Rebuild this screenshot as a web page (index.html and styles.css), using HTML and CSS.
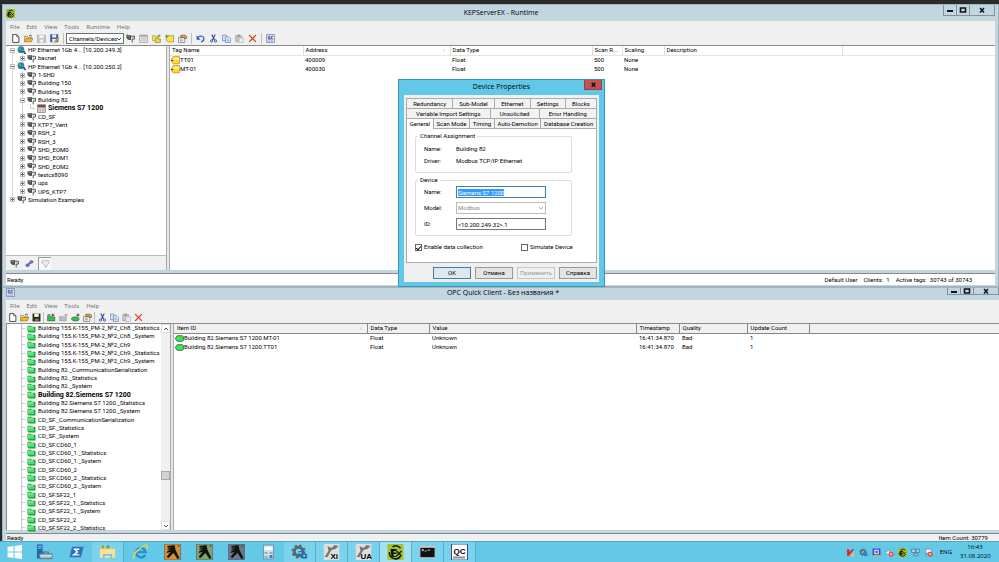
FILE: index.html
```html
<!DOCTYPE html>
<html lang="en">
<head>
  <meta charset="UTF-8">
  <meta name="viewport" content="width=device-width, initial-scale=1.0">
  <title>KEPServerEX - Runtime</title>
  <link rel="stylesheet" href="styles.css">
</head>
<body>
  <!-- icon sprite -->
  <svg class="sprite" aria-hidden="true">
    <symbol id="i-kep" viewBox="0 0 16 16"><rect width="16" height="16" fill="#a4c526"/><path d="M5 3q4-3 8 1M2 8a6 6 0 0 0 11 4" fill="none" stroke="#111" stroke-width="1.500"/><path d="M3 5h6v2H6v1.500h3v1.500H6V12h3v1H4z" fill="#111"/><path d="m9 7 5 5m0-5-5 5" stroke="#111" stroke-width="1.300"/></symbol>
    <symbol id="i-new" viewBox="0 0 16 16"><path d="M3 1h7l4 4v10H3z" fill="#fff" stroke="#334" stroke-width="1.500"/><path d="M10 1v4h4" fill="none" stroke="#334"/></symbol>
    <symbol id="i-open" viewBox="0 0 16 16"><path d="M1 14V4h5l1 2h6v3" fill="#f5d777" stroke="#8a6a1c"/><path d="m1 14 3-6h12l-3 6z" fill="#f0b93a" stroke="#8a6a1c"/><path d="M9 3q3-2 5 1" fill="none" stroke="#333" stroke-width="1.500"/></symbol>
    <symbol id="i-save" viewBox="0 0 16 16"><path d="M1 2h14v13H1z" fill="#c8c8c8" stroke="#999"/><path d="M4 2h8v5H4zM5 10h6v5H5z" fill="#f4f4f4"/></symbol>
    <symbol id="i-saveas" viewBox="0 0 16 16"><path d="M1 1h13v13H1z" fill="#4b62ad" stroke="#303d78"/><path d="M4 1h7v5H4zM4 9h7v5H4z" fill="#eef"/><path d="m8 13 6-7 2 2-6 7z" fill="#e9a23b" stroke="#555" stroke-width=".6"/></symbol>
    <symbol id="i-floppy" viewBox="0 0 16 16"><path d="M1 1h14v14H1z" fill="#25280a"/><path d="M4 1h8v6H4z" fill="#f2f2e0"/><path d="M5 10h7v4H5z" fill="#777"/></symbol>
    <symbol id="i-channel" viewBox="0 0 16 16"><path d="M1 2h8v8H4L1 7z" fill="#333"/><path d="M2 4h6M3 7h5" stroke="#ccc"/><path d="M9 4h6v5h-4v6" fill="none" stroke="#444" stroke-width="1.600"/><path d="m11 7 3-3" stroke="#777"/></symbol>
    <symbol id="i-newchan" viewBox="0 0 16 16"><use href="#i-channel"/><path d="M0 3h5M2.500 0v6" stroke="#379b2c" stroke-width="1.500"/></symbol>
    <symbol id="i-card" viewBox="0 0 16 16"><path d="M1 3h14v12H1z" fill="#e2e2e2" stroke="#888"/><path d="M1 1h14v4H1z" fill="#aaa"/><path d="M4 8h8M4 11h8" stroke="#aaa"/></symbol>
    <symbol id="i-group" viewBox="0 0 16 16"><path d="M1 3h5l1 2h4v7H1z" fill="#ffe56b" stroke="#91832a"/><path d="M6 7h4l1 2h4v6H6z" fill="#f5d641" stroke="#7b701f"/><path d="M10 3h5M12.500 1v5" stroke="#37972f" stroke-width="1.500"/></symbol>
    <symbol id="i-newtag" viewBox="0 0 16 16"><path d="M5 3h10v11H5l-3-3V7z" fill="#ffe345" stroke="#887820"/><path d="M0 4h6M3 1v6" stroke="#37972f" stroke-width="1.600"/></symbol>
    <symbol id="i-props" viewBox="0 0 16 16"><path d="M1 6h11v9H1z" fill="#f8f8f8" stroke="#555"/><path d="M3 9h6M3 12h6" stroke="#556"/><path d="M5 2h8l2 2v4h-4V6H5z" fill="#d9a74e" stroke="#4d4532"/></symbol>
    <symbol id="i-undo" viewBox="0 0 16 16"><path d="M3 6q9-5 11 2 0 5-5 6" fill="none" stroke="#2563c4" stroke-width="2.200"/><path d="M1 2v8h7z" fill="#2563c4"/></symbol>
    <symbol id="i-cut" viewBox="0 0 16 16"><path d="m5 1 5 10m1-10L6 11" stroke="#24458d" stroke-width="1.800"/><circle cx="4.500" cy="12.500" r="2" fill="none" stroke="#2857b3" stroke-width="1.600"/><circle cx="11.500" cy="12.500" r="2" fill="none" stroke="#2857b3" stroke-width="1.600"/></symbol>
    <symbol id="i-copy" viewBox="0 0 16 16"><path d="M1 2h6l3 3v7H1z" fill="#dce8fc" stroke="#3b60a9"/><path d="M6 5h6l3 3v7H6z" fill="#edf3ff" stroke="#3b60a9"/><path d="M8 9h4M8 12h5" stroke="#3b60a9"/></symbol>
    <symbol id="i-paste" viewBox="0 0 16 16"><path d="M1 3h11v11H1z" fill="#c6c6c6" stroke="#999"/><path d="M4 1h5v4H4z" fill="#999"/><path d="M7 7h8v8H7z" fill="#eee" stroke="#aaa"/></symbol>
    <symbol id="i-delete" viewBox="0 0 16 16"><path d="m2 2 12 12M14 2 2 14" stroke="#d23c22" stroke-width="2.200"/></symbol>
    <symbol id="i-qc" viewBox="0 0 16 16"><path d="M1 1h14v14H1z" fill="#e8effc" stroke="#4c5f97"/><path d="M7 4H4v5h3V4zm0 4 1 2M13 4h-3v5h3" fill="none" stroke="#203574" stroke-width="1.300"/><path d="M3 12.500h10" stroke="#203574" stroke-width="1.500" stroke-dasharray="1 1"/></symbol>
    <symbol id="i-globe" viewBox="0 0 16 16"><circle cx="7" cy="6.500" r="6" fill="#2784b5"/><path d="M4 2q4 0 4 3L5 7 2 5zM9 6l4 1-2 4-3-1z" fill="#49ad57"/><path d="M8 10h5v3h3" fill="none" stroke="#23527d" stroke-width="2"/></symbol>
    <symbol id="i-device" viewBox="0 0 16 16"><path d="M1 2h14v13H1z" fill="#ddd" stroke="#554"/><path d="M1 1h14v5H1z" fill="#65594d"/><path d="M9 2h4v4H9z" fill="#d62f22"/><path d="M4 9h3M9 9h3M4 12h3M9 12h3" stroke="#777"/></symbol>
    <symbol id="i-link" viewBox="0 0 16 16"><path d="m4 12 8-8" stroke="#4d51a9" stroke-width="3"/><rect x="1" y="8" width="7" height="6" rx="3" fill="#686dca"/><rect x="8" y="2" width="7" height="6" rx="3" fill="#686dca"/></symbol>
    <symbol id="i-filter" viewBox="0 0 16 16"><path d="M2 3h12v4l-4 4v3H7v-3L2 7z" fill="#eee" stroke="#999"/></symbol>
    <symbol id="i-tag" viewBox="0 0 16 16"><path d="M4 1h11v13H4L1 10V5z" fill="#f7d83c" stroke="#9a7e20"/><path d="M5 3h9v4H5z" fill="#fff09a"/><path d="M0 8h4" stroke="#a53125" stroke-width="2"/></symbol>
    <symbol id="i-item" viewBox="0 0 16 16"><path d="M4 3h9l2 2v6l-2 2H4L1 9V7z" fill="#43e05e" stroke="#236b32" stroke-width="1.500"/></symbol>
    <symbol id="i-folder" viewBox="0 0 16 16"><path d="M1 3h6l1 2h7v10H3l-2-2z" fill="#159438"/><path d="M1 4h5l1 2h6v7H1z" fill="#4bdd69"/><path d="M2 6h9v2H2z" fill="#8ef29c"/></symbol>
    <symbol id="i-newgroup" viewBox="0 0 16 16"><path d="M1 5h5l1 2h7v7H1z" fill="#37bd4e" stroke="#25602f"/><path d="M1 3h5M10 1v5M8 3l5 2M8 5l5-3" stroke="#334" stroke-width="1.200"/></symbol>
    <symbol id="i-newitem" viewBox="0 0 16 16"><path d="M4 7h8l2 2v3l-2 2H4l-3-3V9z" fill="#37bd4e" stroke="#25602f"/><path d="M12 1v5M10 3l5 2M10 5l5-3" stroke="#334" stroke-width="1.200"/></symbol>
    <symbol id="i-gray" viewBox="0 0 16 16"><path d="M1 6h5l1 1h6v7H1z" fill="#bbb" stroke="#999"/><path d="M12 1v5M10 3l5 2M10 5l5-3" stroke="#999" stroke-width="1.200"/></symbol>
    <symbol id="i-min" viewBox="0 0 10 8"><path d="M2 5h6" stroke="#111" stroke-width="2"/></symbol>
    <symbol id="i-max" viewBox="0 0 10 8"><path d="M2.500 2h5v4h-5z" fill="none" stroke="#111" stroke-width="1.600"/></symbol>
    <symbol id="i-close" viewBox="0 0 10 8"><path d="m3 2 4 4.500M7 2 3 6.500" stroke="#111" stroke-width="1.500"/></symbol>
    <symbol id="i-start" viewBox="0 0 16 16"><path d="m1 3 6-1v5.500H1zM8 1.900 15.500 1v6.500H8zM1 8.500h6V14l-6-1zM8 8.500h7.500V15L8 14.100z" fill="#fff"/></symbol>
    <symbol id="i-server" viewBox="0 0 18 16"><path d="M1 0h6v15H1z" fill="#2169b0"/><path d="M2 2h4M2 4h4" stroke="#9bd0f5"/><path d="M4 10h13v5H4z" fill="#a9bac5" stroke="#617684"/><path d="M8 10V8h5v2" fill="none" stroke="#556b7a" stroke-width="1.300"/><path d="M4 12h13" stroke="#e8eef2"/></symbol>
    <symbol id="i-ps" viewBox="0 0 18 16"><path d="M4 2h13l-3 12H1z" fill="#2674ba" stroke="#78b5e0"/><path d="M12 5H7l3 3-4 3h6" fill="none" stroke="#fff" stroke-width="1.500"/></symbol>
    <symbol id="i-explorer" viewBox="0 0 18 16"><path d="M1 2h6l1 2h9v10H1z" fill="#e7c662"/><path d="M3 1h2v3H3zM8 1h3v3H8z" fill="#55a466"/><path d="M1 5h16v9H1z" fill="#f9e39a"/><path d="M5 15v-4h8v4" fill="none" stroke="#85bfe0" stroke-width="2"/></symbol>
    <symbol id="i-ie" viewBox="0 0 18 16"><path d="M14 11a5 5 0 1 1 .5-3H5" fill="none" stroke="#2492d3" stroke-width="2.600"/><path d="M2 15C-1 11 13-1 16 1q1 1-1 4" fill="none" stroke="#f5ce45" stroke-width="1.500"/></symbol>
    <symbol id="i-tower" viewBox="0 0 16 16"><path d="M0 0h16v16H0z" fill="currentColor" stroke="#555" stroke-width=".6"/><path d="m3 2 7-1 1 5 4 8-2 1-4-6-5 5-2-1 4-5-4 1 1-2 4-2-4 1V5l4-2-4 1z" fill="#15130f"/><circle cx="14" cy="2" r="1" fill="#554"/></symbol>
    <symbol id="i-calc" viewBox="0 0 16 16"><path d="M3 1h10v14H3z" fill="#cfe0ec" stroke="#7596ad"/><path d="M4 3h8v3H4z" fill="#f8fcff"/><path d="M4 8h3v2H4zM9 8h3v2H9zM4 12h3v2H4z" fill="#8eafc3"/><path d="M9 11h3v3H9z" fill="#447cb0"/></symbol>
    <symbol id="i-gear" viewBox="0 0 18 16"><circle cx="8" cy="7.500" r="4.500" fill="none" stroke="#596771" stroke-width="3"/><circle cx="8" cy="7.500" r="6.500" fill="none" stroke="#596771" stroke-width="2" stroke-dasharray="2.600 2.500"/><path d="M8 7h5v3h4v5h-6v-3H8z" fill="#1b75b5"/><path d="M9 9h2M13 12h2" stroke="#b4e5ff" stroke-width="1.500"/></symbol>
    <symbol id="i-tool" viewBox="0 0 16 16"><path d="M0 0h16v16H0z" fill="#dfdfdf"/><path d="m1 13 4-6-1-5 4 2 3-3 4 1-3 3-4 1-4 7z" fill="#757575"/></symbol>
    <symbol id="i-cmd" viewBox="0 0 18 16"><path d="M1 2h16v12H1z" fill="#111" stroke="#b5c1c8"/><path d="M1 2h16v1.500H1z" fill="#ddd"/><path d="m3 5 2 1-2 1M6 7h2M9 6h3" fill="none" stroke="#fff" stroke-width=".8"/></symbol>
    <symbol id="t-kasp" viewBox="0 0 16 16"><path d="M2 2h4v5l5-5h4L9 9l6 5H9l-3-4v4H2z" fill="#d9232e"/><path d="M8 10h7v5H8z" fill="#e8c36c"/></symbol>
    <symbol id="t-vm" viewBox="0 0 16 16"><path d="M1 1h14v14H1z" fill="#3d48c4"/><path d="M4 3h8v8H4z" fill="#e5e5ff"/><path d="M6 5h4v4H6z" fill="#4b51b9"/><path d="M1 13h14v2H1z" fill="#ffe34a"/></symbol>
    <symbol id="t-sound" viewBox="0 0 16 16"><path d="M1 6h3l4-4v12l-4-4H1z" fill="#eee" stroke="#789"/><circle cx="11" cy="11" r="4.500" fill="#e04a45"/><path d="m9 9 4 4m0-4-4 4" stroke="#fff" stroke-width="1.300"/></symbol>
    <symbol id="t-net" viewBox="0 0 16 16"><path d="M1 2h7v6H1zM9 2h6v6H9zM5 10h7v4H5z" fill="#9ed1e7" stroke="#4f7284" stroke-width="1.300"/></symbol>
    <symbol id="t-flag" viewBox="0 0 16 16"><path d="M3 1v14M3 2h10v7H3" fill="#f6f6f6" stroke="#778"/><circle cx="11" cy="11" r="4.500" fill="#dc4440"/><path d="m9 9 4 4m0-4-4 4" stroke="#fff" stroke-width="1.300"/></symbol>
  </svg>

  <main class="desktop">
    <section class="window server">
      <header class="titlebar">
        <svg class="app-icon"><use href="#i-kep"/></svg>
        <h1>KEPServerEX - Runtime</h1>
        <div class="controls">
          <button aria-label="Minimize"><svg><use href="#i-min"/></svg></button>
          <button aria-label="Maximize"><svg><use href="#i-max"/></svg></button>
          <button class="wide" aria-label="Close"><svg><use href="#i-close"/></svg></button>
        </div>
      </header>
      <nav class="menubar">
        <button>File</button><button>Edit</button><button>View</button><button>Tools</button><button>Runtime</button><button>Help</button>
      </nav>
      <div class="toolbar">
        <button aria-label="New"><svg><use href="#i-new"/></svg></button>
        <button aria-label="Open"><svg><use href="#i-open"/></svg></button>
        <button aria-label="Save"><svg><use href="#i-save"/></svg></button>
        <button aria-label="Save as"><svg><use href="#i-saveas"/></svg></button>
        <span class="sep"></span>
        <select aria-label="View"><option>Channels/Devices</option></select>
        <button aria-label="New channel"><svg><use href="#i-newchan"/></svg></button>
        <button aria-label="New device"><svg><use href="#i-card"/></svg></button>
        <button aria-label="New tag group"><svg><use href="#i-group"/></svg></button>
        <button aria-label="New tag"><svg><use href="#i-newtag"/></svg></button>
        <button aria-label="Properties"><svg><use href="#i-props"/></svg></button>
        <span class="sep"></span>
        <button aria-label="Undo"><svg><use href="#i-undo"/></svg></button>
        <button aria-label="Cut"><svg><use href="#i-cut"/></svg></button>
        <button aria-label="Copy"><svg><use href="#i-copy"/></svg></button>
        <button aria-label="Paste"><svg><use href="#i-paste"/></svg></button>
        <button aria-label="Delete"><svg><use href="#i-delete"/></svg></button>
        <span class="sep"></span>
        <button aria-label="Quick client"><svg><use href="#i-qc"/></svg></button>
      </div>
      <div class="content">
        <aside class="tree-pane">
          <ul class="tree channels">
            <li><i class="exp open"></i><svg><use href="#i-globe"/></svg>HP Ethernet 1Gb 4... [10.200.249.3]</li>
            <li class="sub"><i class="exp"></i><svg><use href="#i-channel"/></svg>bacnet</li>
            <li><i class="exp open"></i><svg><use href="#i-globe"/></svg>HP Ethernet 1Gb 4... [10.200.250.2]</li>
            <li class="sub"><i class="exp"></i><svg><use href="#i-channel"/></svg>1-SHD</li>
            <li class="sub"><i class="exp"></i><svg><use href="#i-channel"/></svg>Building 150</li>
            <li class="sub"><i class="exp"></i><svg><use href="#i-channel"/></svg>Building 155</li>
            <li class="sub"><i class="exp open"></i><svg><use href="#i-channel"/></svg>Building 82</li>
            <li class="sub leaf"><i class="stub"></i><svg><use href="#i-device"/></svg><b>Siemens S7 1200</b></li>
            <li class="sub"><i class="exp"></i><svg><use href="#i-channel"/></svg>CD_SF</li>
            <li class="sub"><i class="exp"></i><svg><use href="#i-channel"/></svg>KTP7_Vent</li>
            <li class="sub"><i class="exp"></i><svg><use href="#i-channel"/></svg>RSH_2</li>
            <li class="sub"><i class="exp"></i><svg><use href="#i-channel"/></svg>RSH_3</li>
            <li class="sub"><i class="exp"></i><svg><use href="#i-channel"/></svg>SHD_EOM0</li>
            <li class="sub"><i class="exp"></i><svg><use href="#i-channel"/></svg>SHD_EOM1</li>
            <li class="sub"><i class="exp"></i><svg><use href="#i-channel"/></svg>SHD_EOM2</li>
            <li class="sub"><i class="exp"></i><svg><use href="#i-channel"/></svg>testcx8090</li>
            <li class="sub"><i class="exp"></i><svg><use href="#i-channel"/></svg>ups</li>
            <li class="sub"><i class="exp"></i><svg><use href="#i-channel"/></svg>UPS_KTP7</li>
            <li><i class="exp"></i><svg><use href="#i-channel"/></svg>Simulation Examples</li>
          </ul>
          <div class="pane-tabs">
            <button aria-label="Channels"><svg><use href="#i-channel"/></svg></button>
            <button aria-label="Aliases"><svg><use href="#i-link"/></svg></button>
            <button class="pressed" aria-label="Filter"><svg><use href="#i-filter"/></svg></button>
          </div>
        </aside>
        <div class="list">
          <table>
            <colgroup><col class="w133"><col class="w147"><col class="w142"><col class="w30"><col class="w42"><col class="w178"><col></colgroup>
            <thead><tr><th>Tag Name</th><th>Address <span class="sort">⁄</span></th><th>Data Type</th><th>Scan R...</th><th>Scaling</th><th>Description</th><th></th></tr></thead>
            <tbody>
              <tr><td><svg><use href="#i-tag"/></svg>TT01</td><td>400009</td><td>Float</td><td>500</td><td>None</td><td></td><td></td></tr>
              <tr><td><svg><use href="#i-tag"/></svg>MT-01</td><td>400030</td><td>Float</td><td>500</td><td>None</td><td></td><td></td></tr>
            </tbody>
          </table>
        </div>
      </div>
      <footer class="statusbar"><span class="grow">Ready</span><span>Default User</span><span>Clients:&nbsp; 1</span><span>Active tags:&nbsp; 30743 of 30743</span></footer>
    </section>

    <section class="window client">
      <header class="titlebar">
        <svg class="app-icon"><use href="#i-qc"/></svg>
        <h1>OPC Quick Client - Без названия *</h1>
        <div class="controls">
          <button aria-label="Minimize"><svg><use href="#i-min"/></svg></button>
          <button aria-label="Maximize"><svg><use href="#i-max"/></svg></button>
          <button class="wide" aria-label="Close"><svg><use href="#i-close"/></svg></button>
        </div>
      </header>
      <nav class="menubar">
        <button>File</button><button>Edit</button><button>View</button><button>Tools</button><button>Help</button>
      </nav>
      <div class="toolbar">
        <button aria-label="New"><svg><use href="#i-new"/></svg></button>
        <button aria-label="Open"><svg><use href="#i-open"/></svg></button>
        <button aria-label="Save"><svg><use href="#i-floppy"/></svg></button>
        <span class="sep"></span>
        <button aria-label="New server"><svg><use href="#i-newgroup"/></svg></button>
        <button aria-label="New group"><svg><use href="#i-gray"/></svg></button>
        <button aria-label="New item"><svg><use href="#i-newitem"/></svg></button>
        <button aria-label="Properties"><svg><use href="#i-props"/></svg></button>
        <span class="sep"></span>
        <button aria-label="Cut"><svg><use href="#i-cut"/></svg></button>
        <button aria-label="Copy"><svg><use href="#i-copy"/></svg></button>
        <button aria-label="Paste"><svg><use href="#i-paste"/></svg></button>
        <button aria-label="Delete"><svg><use href="#i-delete"/></svg></button>
      </div>
      <div class="content">
        <aside class="tree-pane">
          <ul class="tree groups">
            <li><svg><use href="#i-folder"/></svg>Building 155.K-155_PM-2_№2_Ch8._Statistics</li>
            <li><svg><use href="#i-folder"/></svg>Building 155.K-155_PM-2_№2_Ch8._System</li>
            <li><svg><use href="#i-folder"/></svg>Building 155.K-155_PM-2_№2_Ch9</li>
            <li><svg><use href="#i-folder"/></svg>Building 155.K-155_PM-2_№2_Ch9._Statistics</li>
            <li><svg><use href="#i-folder"/></svg>Building 155.K-155_PM-2_№2_Ch9._System</li>
            <li><svg><use href="#i-folder"/></svg>Building 82._CommunicationSerialization</li>
            <li><svg><use href="#i-folder"/></svg>Building 82._Statistics</li>
            <li><svg><use href="#i-folder"/></svg>Building 82._System</li>
            <li><svg><use href="#i-folder"/></svg><b>Building 82.Siemens S7 1200</b></li>
            <li><svg><use href="#i-folder"/></svg>Building 82.Siemens S7 1200._Statistics</li>
            <li><svg><use href="#i-folder"/></svg>Building 82.Siemens S7 1200._System</li>
            <li><svg><use href="#i-folder"/></svg>CD_SF._CommunicationSerialization</li>
            <li><svg><use href="#i-folder"/></svg>CD_SF._Statistics</li>
            <li><svg><use href="#i-folder"/></svg>CD_SF._System</li>
            <li><svg><use href="#i-folder"/></svg>CD_SF.CD60_1</li>
            <li><svg><use href="#i-folder"/></svg>CD_SF.CD60_1._Statistics</li>
            <li><svg><use href="#i-folder"/></svg>CD_SF.CD60_1._System</li>
            <li><svg><use href="#i-folder"/></svg>CD_SF.CD60_2</li>
            <li><svg><use href="#i-folder"/></svg>CD_SF.CD60_2._Statistics</li>
            <li><svg><use href="#i-folder"/></svg>CD_SF.CD60_2._System</li>
            <li><svg><use href="#i-folder"/></svg>CD_SF.SF22_1</li>
            <li><svg><use href="#i-folder"/></svg>CD_SF.SF22_1._Statistics</li>
            <li><svg><use href="#i-folder"/></svg>CD_SF.SF22_1._System</li>
            <li><svg><use href="#i-folder"/></svg>CD_SF.SF22_2</li>
            <li><svg><use href="#i-folder"/></svg>CD_SF.SF22_2._Statistics</li>
          </ul>
          <div class="scrollbar">
            <button aria-label="Scroll up"><svg viewBox="0 0 8 8"><path d="m2 5 2-2 2 2" fill="none" stroke="#555"/></svg></button>
            <span class="track"><span class="thumb"></span></span>
            <button aria-label="Scroll down"><svg viewBox="0 0 8 8"><path d="m2 3 2 2 2-2" fill="none" stroke="#555"/></svg></button>
          </div>
        </aside>
        <div class="list">
          <table>
            <colgroup><col class="w193"><col class="w62"><col class="w207"><col class="w43"><col class="w68"><col class="w62"><col></colgroup>
            <thead><tr><th>Item ID <span class="sort">⁄</span></th><th>Data Type</th><th>Value</th><th>Timestamp</th><th>Quality</th><th>Update Count</th><th></th></tr></thead>
            <tbody>
              <tr><td><svg><use href="#i-item"/></svg>Building 82.Siemens S7 1200.MT-01</td><td>Float</td><td>Unknown</td><td>16:41:34.870</td><td>Bad</td><td>1</td><td></td></tr>
              <tr><td><svg><use href="#i-item"/></svg>Building 82.Siemens S7 1200.TT01</td><td>Float</td><td>Unknown</td><td>16:41:34.870</td><td>Bad</td><td>1</td><td></td></tr>
            </tbody>
          </table>
        </div>
      </div>
      <footer class="statusbar"><span class="grow">Ready</span><span>Item Count: 30779</span></footer>
    </section>

    <form class="dialog">
      <header>
        <h2>Device Properties</h2>
        <button type="button" class="dialog-close" aria-label="Close"><svg><use href="#i-close"/></svg></button>
      </header>
      <div class="dialog-body">
        <div class="tabs">
          <div class="tab-row"><button type="button">Redundancy</button><button type="button">Sub-Model</button><button type="button">Ethernet</button><button type="button">Settings</button><button type="button">Blocks</button></div>
          <div class="tab-row"><button type="button">Variable Import Settings</button><button type="button">Unsolicited</button><button type="button">Error Handling</button></div>
          <div class="tab-row"><button type="button" class="active">General</button><button type="button">Scan Mode</button><button type="button">Timing</button><button type="button">Auto-Demotion</button><button type="button">Database Creation</button></div>
        </div>
        <div class="panel">
          <fieldset class="info">
            <legend>Channel Assignment</legend>
            <dl><dt>Name:</dt><dd>Building 82</dd><dt>Driver:</dt><dd>Modbus TCP/IP Ethernet</dd></dl>
          </fieldset>
          <fieldset class="fields">
            <legend>Device</legend>
            <label for="devName">Name:</label>
            <div class="name-box"><input type="text" id="devName" value="Siemens S7 1200"></div>
            <label for="devModel">Model:</label>
            <select id="devModel" disabled><option>Modbus</option></select>
            <label for="devId">ID:</label>
            <input type="text" id="devId" value="&lt;10.200.249.32&gt;.1">
          </fieldset>
          <div class="checks">
            <label><input type="checkbox" checked>Enable data collection</label>
            <label><input type="checkbox">Simulate Device</label>
          </div>
        </div>
        <div class="buttons">
          <button type="button" class="default">OK</button><button type="button">Отмена</button><button type="button" disabled>Применить</button><button type="button">Справка</button>
        </div>
      </div>
    </form>
  </main>

  <footer class="taskbar">
    <button class="start" aria-label="Start"><svg><use href="#i-start"/></svg></button>
    <button aria-label="Server Manager"><svg><use href="#i-server"/></svg></button>
    <button aria-label="PowerShell"><svg><use href="#i-ps"/></svg></button>
    <button class="running" aria-label="Explorer"><svg><use href="#i-explorer"/></svg></button>
    <button aria-label="Internet Explorer"><svg><use href="#i-ie"/></svg></button>
    <button class="orange" aria-label="Station"><svg><use href="#i-tower"/></svg></button>
    <button class="green" aria-label="Station tools"><svg><use href="#i-tower"/></svg></button>
    <button class="slate" aria-label="Station log"><svg><use href="#i-tower"/></svg></button>
    <button aria-label="Calculator"><svg><use href="#i-calc"/></svg></button>
    <button class="running" aria-label="Services"><svg><use href="#i-gear"/></svg></button>
    <button class="running" aria-label="Xi"><svg viewBox="0 0 16 16"><use href="#i-tool"/><text x="7" y="15">Xi</text></svg></button>
    <button class="running" aria-label="UA"><svg viewBox="0 0 16 16"><use href="#i-tool"/><text x="5" y="15">UA</text></svg></button>
    <button class="running current" aria-label="KEPServerEX"><svg><use href="#i-kep"/></svg></button>
    <button class="running" aria-label="Command Prompt"><svg><use href="#i-cmd"/></svg></button>
    <button class="running" aria-label="OPC Quick Client"><svg viewBox="0 0 16 16"><path d="M0 0h16v16H0z" fill="#fff" stroke="#334a93"/><text x="2" y="10" class="qc">QC</text><path d="M2 13.500h12" stroke="#222" stroke-width="2" stroke-dasharray="1 1"/></svg></button>
    <div class="tray">
      <svg><use href="#t-kasp"/></svg>
      <svg><use href="#i-gear"/></svg>
      <svg><use href="#t-vm"/></svg>
      <svg><use href="#t-sound"/></svg>
      <svg><use href="#i-kep"/></svg>
      <svg><use href="#t-net"/></svg>
      <svg><use href="#t-flag"/></svg>
    </div>
    <span class="lang">ENG</span>
    <time class="clock">16:43<br>31.08.2020</time>
  </footer>
  <script>
    // the name field opens with its text selected
    document.getElementById("devName").select();
  </script>
</body>
</html>
```
FILE: styles.css
```css
* {
  box-sizing: border-box;
}

body {
  margin: 0;
  height: 100vh;
  display: flex;
  flex-direction: column;
  overflow: hidden;
  background: #2b2b2b;
  color: #000;
  font-family: "Liberation Sans Narrow", Roboto, "Liberation Sans", sans-serif;
  font-size: 6px;
  line-height: 8px;
}

button, input, select {
  font: inherit;
  color: inherit;
  margin: 0;
  padding: 0;
  border: 0;
  background: none;
  border-radius: 0;
}

button {
  display: flex;
  align-items: center;
  justify-content: center;
}

h1, h2, ul, dl, dd {
  margin: 0;
  padding: 0;
}

svg {
  display: block;
  flex: none;
  width: 9px;
  height: 9px;
}

.sprite {
  position: absolute;
  width: 0;
  height: 0;
}

.desktop {
  flex: 1;
  min-height: 0;
  position: relative;
  display: grid;
  grid-template-rows: minmax(0, 283fr) minmax(0, 254fr);
  padding: 4px 0 0 2px;
}

/* windows */
.window {
  display: flex;
  flex-direction: column;
  min-width: 0;
  background: #c3d5de;
  border: 1px solid #9fb5bf;
  padding: 0 3px 1px;
}

.client {
  padding: 0 0 0 3px;
  border-bottom: 0;
  border-right: 0;
}

.titlebar {
  display: flex;
  align-items: center;
  height: 16px;
  flex: none;
}

h1, h2, .menubar, .lang, .clock {
  font-family: "Open Sans", "Noto Sans", sans-serif;
  font-size: 7px;
  font-weight: normal;
}

h1 {
  flex: 1;
  text-align: center;
}

.controls {
  display: flex;
  align-self: flex-start;
  width: 52px;
  margin-left: -44px;
  height: 11px;
  border: 1px solid #81939c;
  border-top: 0;
}

.controls button {
  flex: 1;
  border-right: 1px solid #81939c;
}

.controls .wide {
  flex: 2;
  border-right: 0;
}

.controls svg {
  width: 10px;
  height: 8px;
}

.client .titlebar {
  height: 12px;
  padding-bottom: 3px;
  overflow: hidden;
}

.client .controls {
  height: 7px;
}

.menubar {
  display: flex;
  align-items: center;
  gap: 7px;
  height: 11px;
  flex: none;
  padding-left: 4px;
  background: #f0f0f0;
  color: #666;
}

.menubar, .lang, .clock {
  font-size: 6px;
}

.toolbar {
  display: flex;
  align-items: center;
  flex: none;
  height: 13px;
  padding-left: 3px;
  background: #f0f0f0;
}

.toolbar button {
  width: 13px;
  height: 12px;
}

.toolbar .sep {
  width: 1px;
  height: 11px;
  margin: 0 2px;
  background: #c0c0c0;
}

.toolbar select {
  width: 58px;
  height: 11px;
  padding-left: 2px;
  border: 1px solid #707070;
}

select {
  appearance: none;
  background: #fff url("data:image/svg+xml,%3Csvg xmlns='http://www.w3.org/2000/svg' viewBox='0 0 8 8'%3E%3Cpath d='m2 3 2 2 2-2' fill='none' stroke='%23444'/%3E%3C/svg%3E") no-repeat right center / 8px 8px;
}

.client .toolbar {
  height: 12px;
  padding-left: 0;
}

.client .toolbar button {
  width: 12px;
}

.client .toolbar .sep {
  margin: 0 1px;
}

.content {
  flex: 1;
  min-height: 0;
  display: flex;
  gap: 2px;
  background: #e6e6e6;
  border-top: 1px solid #8c8c8c;
}

.tree-pane {
  flex: none;
  width: 161px;
  display: flex;
  flex-direction: column;
  background: #fff;
  border-right: 1px solid #aaa;
}

.client .tree-pane {
  width: 165px;
  flex-direction: row;
  border-left: 1px solid #888;
}

.tree {
  list-style: none;
  display: grid;
  grid-auto-rows: 1fr;
  overflow: hidden;
}

.tree li {
  display: flex;
  align-items: center;
  gap: 2px;
  min-height: 0;
  white-space: nowrap;
}

.tree b {
  font-size: 7px;
}

.channels {
  height: 158px;
  background: linear-gradient(#d5d5d5, #d5d5d5) 6px 4px / 1px 150px no-repeat;
}

.channels li {
  padding-left: 4px;
}

.channels .sub {
  padding-left: 14px;
  background: linear-gradient(#d5d5d5, #d5d5d5) 16px 0 / 1px 100% no-repeat;
}

.channels .leaf {
  padding-left: 24px;
}

/* plus / minus box */
.exp {
  width: 5px;
  height: 5px;
  border: 1px solid #bbb;
  background: linear-gradient(#666, #666) center / 3px 1px no-repeat, linear-gradient(#666, #666) center / 1px 3px no-repeat, #fff;
}

.exp.open {
  background: linear-gradient(#666, #666) center / 3px 1px no-repeat, #fff;
}

.stub {
  width: 5px;
  height: 5px;
  border: solid #ccc;
  border-width: 0 0 1px 1px;
  align-self: flex-start;
}

.groups {
  flex: 1;
  min-width: 0;
  height: 208px;
  background: linear-gradient(#c8c8c8, #c8c8c8) 14px 0 / 1px 100% no-repeat;
}

.groups li::before {
  content: "";
  width: 4px;
  height: 1px;
  margin-left: 14px;
  background: #c8c8c8;
}

.pane-tabs {
  display: flex;
  align-items: center;
  gap: 2px;
  height: 15px;
  margin-top: auto;
  padding-left: 2px;
  background: #f0f0f0;
  border-top: 1px solid #bbb;
}

.pane-tabs button {
  width: 13px;
  height: 13px;
}

.pane-tabs .pressed {
  background: #f8f8f8;
  border: 1px solid #999;
  border-width: 1px 0 0 1px;
}

.scrollbar {
  flex: none;
  width: 9px;
  display: flex;
  flex-direction: column;
  background: #f0f0f0;
}

.scrollbar button {
  height: 9px;
  background: #fff;
  border: 1px solid #ddd;
}

.scrollbar svg {
  width: 8px;
  height: 8px;
}

.track {
  flex: 1;
  display: flex;
  flex-direction: column;
}

.track::before {
  content: "";
  flex: 140;
}

.track::after {
  content: "";
  flex: 41;
}

.thumb {
  height: 9px;
  background: #d2d2d2;
  border: 1px solid #aaa;
}

.list {
  flex: 1;
  min-width: 0;
  background: #fff;
  border-left: 1px solid #aaa;
}

table {
  table-layout: fixed;
  width: 100%;
  border-collapse: collapse;
}

th, td {
  height: 9px;
  padding: 0 0 0 3px;
  font-weight: normal;
  text-align: left;
  white-space: nowrap;
  line-height: 8px;
}

th {
  border-right: 1px solid #ddd;
  border-bottom: 1px solid #e4e4e4;
}

th:last-child {
  border-right: 0;
}

.client thead {
  background: #f0f0f0;
}

.client th {
  border-color: #888;
}

.client th:last-child {
  border-right: 0;
}

td svg {
  float: left;
}

.server th, .server td {
  padding-left: 2px;
}

.client td:first-child, .server td:first-child {
  padding-left: 1px;
}

.sort {
  float: right;
  margin-right: 4px;
  color: #999;
}

.w30 { width: 30px; }
.w42 { width: 42px; }
.w43 { width: 43px; }
.w62 { width: 62px; }
.w68 { width: 68px; }
.w133 { width: 133px; }
.w142 { width: 142px; }
.w147 { width: 147px; }
.w178 { width: 178px; }
.w193 { width: 193px; }
.w207 { width: 207px; }

.statusbar {
  flex: none;
  display: flex;
  align-items: center;
  gap: 6px;
  height: 12px;
  margin-top: 3px;
  padding: 0 23px 0 1px;
  background: #fff;
  border-top: 1px solid #888;
}

.statusbar .grow {
  flex: 1;
}

.client .statusbar {
  height: 8px;
  padding-right: 11px;
  background: #f0f0f0;
}

/* device properties dialog */
.dialog {
  position: absolute;
  left: 398px;
  top: 79px;
  width: 207px;
  padding: 0 5px 4px;
  background: #62c8e9;
  border: 1px solid #3b94b4;
}

.dialog header {
  display: flex;
  align-items: flex-start;
  height: 15px;
}

.dialog h2 {
  flex: 1;
  padding: 3px 0 0 15px;
  text-align: center;
}

.dialog-close {
  width: 18px;
  height: 10px;
  margin-right: -3px;
  background: #c75050;
  border: 1px solid #8e4646;
  border-top: 0;
}

.dialog-body {
  background: #f0f0f0;
  padding: 3px 2px;
}

.tab-row {
  display: flex;
}

.tab-row button {
  flex: auto;
  height: 10px;
  border: 1px solid #aaa;
  border-width: 1px 1px 0 0;
  background: #f2f2f2;
}

.tab-row button:first-child {
  border-left-width: 1px;
}

.tab-row .active {
  background: #fff;
}

.panel {
  background: #fff;
  border: 1px solid #aaa;
  padding: 3px 24px 11px 8px;
}

.tab-row:last-child .active {
  margin-bottom: -1px;
  height: 11px;
}

fieldset {
  margin: 0;
  border: 1px solid #ddd;
  border-radius: 2px;
}

.info {
  padding: 5px 8px 7px;
  margin-bottom: 3px;
}

legend {
  padding: 0 2px;
  margin-left: -6px;
}

.info dl {
  display: grid;
  grid-template-columns: 32px 1fr;
  row-gap: 4px;
}

.fields {
  display: grid;
  grid-template-columns: 32px 90px;
  row-gap: 4px;
  align-items: center;
  padding: 2px 8px 5px;
}

.fields input, .fields select {
  width: 100%;
  height: 12px;
  padding: 0 1px;
  border: 1px solid #777;
  background-color: #fff;
  outline: none;
}

.name-box input {
  display: block;
  border-color: #3c7fb1;
}

.fields select:disabled {
  color: #888;
  border-color: #bbb;
  opacity: 1;
  background-image: url("data:image/svg+xml,%3Csvg xmlns='http://www.w3.org/2000/svg' viewBox='0 0 8 8'%3E%3Cpath d='m2 3 2 2 2-2' fill='none' stroke='%23aaa'/%3E%3C/svg%3E");
}

::selection {
  background: #3399ff;
  color: #fff;
}

.checks {
  display: grid;
  grid-template-columns: 106px auto;
  margin-top: 7px;
  white-space: nowrap;
}

.checks label {
  display: flex;
  align-items: center;
  gap: 2px;
}

.checks input {
  appearance: none;
  display: flex;
  align-items: center;
  justify-content: center;
  width: 7px;
  height: 7px;
  border: 1px solid #666;
  background: #fff;
}

.checks input:checked::before {
  content: "";
  width: 2px;
  height: 4px;
  border: solid #111;
  border-width: 0 1px 1px 0;
  transform: rotate(40deg);
}

.buttons {
  display: flex;
  justify-content: flex-end;
  gap: 4px;
  margin-top: 4px;
}

.buttons button {
  width: 38px;
  height: 12px;
  background: #e4e4e4;
  border: 1px solid #999;
}

.buttons .default {
  border-color: #3c7fb1;
  background: #e0e8ee;
}

.buttons button:disabled {
  color: #999;
  border-color: #c8c8c8;
  background: #f0f0f0;
}

/* taskbar */
.taskbar {
  flex: none;
  display: flex;
  align-items: center;
  height: 21px;
  background: #64c9e7;
  border-top: 1px solid #4fa9c4;
}

.taskbar button {
  width: 32px;
  height: 20px;
}

.taskbar .start {
  width: 28px;
}

.taskbar .running {
  background: #7bd2ec;
  border: solid #4fb0cf;
  border-width: 0 1px 0 0;
}

.taskbar .current {
  background: #a6e1f2;
}

.taskbar button svg {
  width: 17px;
  height: 16px;
}

.taskbar text {
  font: bold 8px "Liberation Sans", sans-serif;
}

.orange { color: #d98f35; }
.green { color: #82a36c; }
.slate { color: #67788f; }

.taskbar .orange svg use, .taskbar .green svg use, .taskbar .slate svg use {
  color: inherit;
}

.tray {
  display: flex;
  gap: 4px;
  margin-left: auto;
}

.lang {
  margin: 0 8px 0 7px;
}

.clock {
  width: 30px;
  margin-right: 9px;
  text-align: center;
  line-height: 9px;
}
```
